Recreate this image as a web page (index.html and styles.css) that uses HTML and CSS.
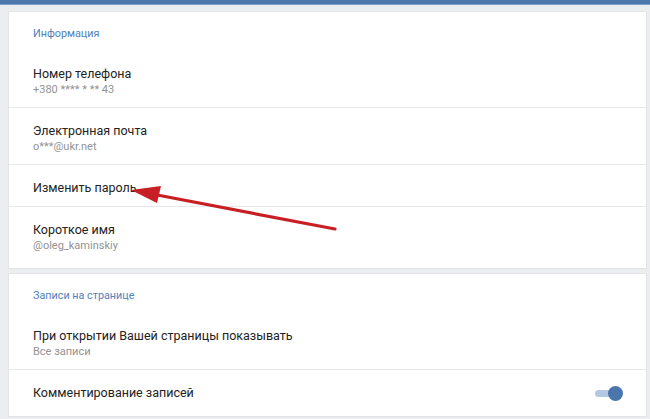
FILE: index.html
```html
<!DOCTYPE html>
<html lang="ru">
<head>
<meta charset="utf-8">
<link rel="stylesheet" href="styles.css">
</head>
<body>
<div class="topbar"></div>
<main class="page">
  <section class="card">
    <div class="card-header">Информация</div>
    <div class="row">
      <div class="title">Номер телефона</div>
      <div class="sub">+380 **** * ** 43</div>
    </div>
    <div class="row">
      <div class="title">Электронная почта</div>
      <div class="sub">o***@ukr.net</div>
    </div>
    <div class="row single">
      <div class="title">Изменить пароль</div>
    </div>
    <div class="row">
      <div class="title">Короткое имя</div>
      <div class="sub">@oleg_kaminskiy</div>
    </div>
  </section>
  <section class="card">
    <div class="card-header">Записи на странице</div>
    <div class="row">
      <div class="title">При открытии Вашей страницы показывать</div>
      <div class="sub">Все записи</div>
    </div>
    <div class="row single toggle-row">
      <div class="title">Комментирование записей</div>
      <div class="toggle"><span class="track"></span><span class="knob"></span></div>
    </div>
  </section>
</main>
<svg class="arrow" width="650" height="419" viewBox="0 0 650 419">
  <line x1="335" y1="229" x2="152" y2="194" stroke="#c81f24" stroke-width="3.2" stroke-linecap="round"/>
  <polygon points="131,190 161,186 157,203" fill="#c81f24"/>
</svg>
</body>
</html>
```
FILE: styles.css
```css
html, body {
  margin: 0;
  padding: 0;
}
body {
  background: #ebedf0;
  font-family: Roboto, "Noto Sans", Arial, sans-serif;
  width: 650px;
  height: 419px;
  overflow: hidden;
  position: relative;
}
.topbar {
  height: 4px;
  background: #4d78ab;
  border-bottom: 1px solid #7a9cc6;
}
.page {
  display: flex;
  flex-direction: column;
  gap: 6px;
  padding: 7px 4px 0 9px;
}
.card {
  background: #fff;
  box-shadow: 0 0 0 1px #e3e4e8, 0 1px 1px rgba(0,0,0,0.06);
  padding-bottom: 4px;
}
.card-header {
  height: 39px;
  box-sizing: border-box;
  padding: 14px 0 0 24px;
  font-size: 10.8px;
  line-height: 16px;
  color: #5181b8;
}
.row {
  height: 57px;
  box-sizing: border-box;
  padding: 4px 24px 0;
  display: flex;
  flex-direction: column;
  justify-content: center;
  border-bottom: 1px solid #e7e8ec;
}
.row:last-child {
  border-bottom: none;
}
.row.single {
  height: 42px;
}
.title {
  font-size: 12.5px;
  line-height: 16px;
  color: #222;
}
.sub {
  font-size: 11px;
  line-height: 15px;
  color: #939393;
}
.toggle-row {
  flex-direction: row;
  align-items: center;
  justify-content: space-between;
  padding-right: 23px;
}
.toggle {
  position: relative;
  width: 28px;
  height: 15px;
}
.track {
  position: absolute;
  left: 0;
  top: 4px;
  width: 24px;
  height: 7px;
  border-radius: 4px;
  background: #b3c8e2;
}
.knob {
  position: absolute;
  right: 0;
  top: 0;
  width: 15px;
  height: 15px;
  border-radius: 50%;
  background: #4a76ac;
}
.arrow {
  position: absolute;
  left: 0;
  top: 0;
  pointer-events: none;
}
```
